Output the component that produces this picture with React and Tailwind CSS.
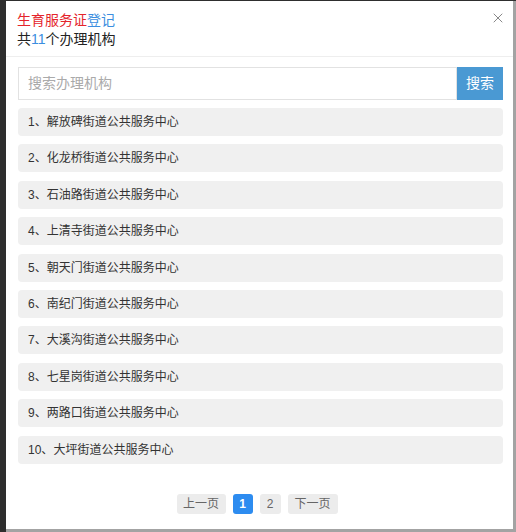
import React from 'react';
import { X } from 'lucide-react';

const orgs = [
  '解放碑街道公共服务中心',
  '化龙桥街道公共服务中心',
  '石油路街道公共服务中心',
  '上清寺街道公共服务中心',
  '朝天门街道公共服务中心',
  '南纪门街道公共服务中心',
  '大溪沟街道公共服务中心',
  '七星岗街道公共服务中心',
  '两路口街道公共服务中心',
  '大坪街道公共服务中心',
];

const font = { fontFamily: '"Liberation Sans", "Noto Sans CJK SC", sans-serif' };

const App = () => {
  return (
    <div className="w-[516px] h-[532px] flex bg-[#2e2e2e] overflow-hidden" style={font}>
      <div className="w-[6px] shrink-0 bg-[#2e2e2e]" />
      <div className="flex-1 flex flex-col mt-[1px] bg-white border-r-[3px] border-b-[3px] border-[#a3a3a3]">
        <div className="relative px-[11px] pt-[10px] pb-[7px] border-b border-[#eeeeee]">
          <div className="text-[14px] leading-[19px]">
            <span className="text-[#e4242b]">生育服务证</span>
            <span className="text-[#3b8ee0]">登记</span>
          </div>
          <div className="text-[14px] leading-[19px] text-[#222]">
            共<span className="text-[#3b8ee0]">11</span>个办理机构
          </div>
          <button className="absolute right-[7px] top-[9px] text-[#888]">
            <X size={16} strokeWidth={1.5} />
          </button>
        </div>

        <div className="pl-[12px] pr-[10px] pt-[10px]">
          <div className="flex h-[33px]">
            <input
              className="flex-1 border border-[#e2e2e2] px-[9px] text-[14px] text-[#333] placeholder:text-[#aaaaaa] outline-none"
              placeholder="搜索办理机构"
            />
            <button className="w-[46px] bg-[#4a99d3] text-white text-[14px]">搜索</button>
          </div>

          <div className="flex flex-col gap-[8.4px] mt-[8px]">
            {orgs.map((o, i) => (
              <div
                key={i}
                className="h-[28px] flex items-center px-[10px] rounded-[4px] bg-[#f0f0f0] text-[12px] text-[#333]"
              >
                {i + 1}、{o}
              </div>
            ))}
          </div>
        </div>

        <div className="flex justify-center items-center gap-[7px] mt-[30px] mr-[5px] text-[12px]">
          <button className="h-[20px] w-[49px] rounded-[3px] bg-[#ececec] text-[#666]">上一页</button>
          <button className="h-[20px] w-[20px] rounded-[3px] bg-[#2d8cf0] text-white font-bold">1</button>
          <button className="h-[20px] w-[21px] rounded-[3px] bg-[#ececec] text-[#666]">2</button>
          <button className="h-[20px] w-[50px] rounded-[3px] bg-[#ececec] text-[#666]">下一页</button>
        </div>
      </div>
    </div>
  );
};

export default App;
